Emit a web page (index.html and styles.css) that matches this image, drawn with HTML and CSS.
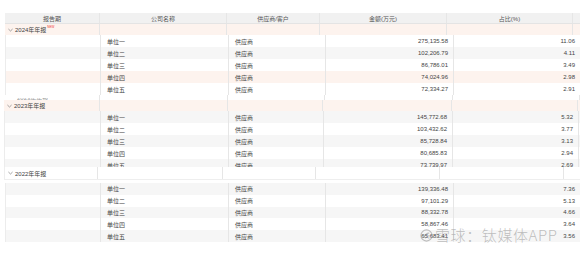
FILE: index.html
```html
<!DOCTYPE html>
<html>
  <head>
    <meta charset="utf-8"/>
    <title>前五大供应商</title>
    <link rel="stylesheet" href="styles.css">
  </head>
  <body>
    <div class="page">
      <div class="thead cols-a">
        <div class="cell">报告期</div>
        <div class="cell">公司名称</div>
        <div class="cell">供应商/客户</div>
        <div class="cell">金额(万元)</div>
        <div class="cell">占比(%)</div>
      </div>

      <div class="group pink cols-a">
        <div class="cell first"><svg class="chev" viewBox="0 0 6 4"><polyline points="0.5,0.8 3,3.2 5.5,0.8"/></svg>2024年年报<span class="new">NEW</span></div>
        <div class="cell"></div>
        <div class="cell"></div>
        <div class="cell"></div>
        <div class="cell"></div>
      </div>
      <div class="rows cols-b">
        <div class="row"><div class="cell"></div><div class="cell">单位一</div><div class="cell">供应商</div><div class="cell num">275,135.58</div><div class="cell num">11.06</div></div>
        <div class="row gray"><div class="cell"></div><div class="cell">单位二</div><div class="cell">供应商</div><div class="cell num">102,206.79</div><div class="cell num">4.11</div></div>
        <div class="row"><div class="cell"></div><div class="cell">单位三</div><div class="cell">供应商</div><div class="cell num">86,786.01</div><div class="cell num">3.49</div></div>
        <div class="row pink"><div class="cell"></div><div class="cell">单位四</div><div class="cell">供应商</div><div class="cell num">74,024.96</div><div class="cell num">2.98</div></div>
        <div class="row"><div class="cell"></div><div class="cell">单位五</div><div class="cell">供应商</div><div class="cell num">72,334.27</div><div class="cell num">2.91</div></div>
      </div>
      <div class="seam cols-b">
        <div class="cell"><span class="cut">2023年年报</span></div>
        <div class="cell"></div>
        <div class="cell"></div>
        <div class="cell"></div>
        <div class="cell"></div>
      </div>

      <div class="group pink cols-c">
        <div class="cell first"><svg class="chev" viewBox="0 0 6 4"><polyline points="0.5,0.8 3,3.2 5.5,0.8"/></svg>2023年年报</div>
        <div class="cell"></div>
        <div class="cell"></div>
        <div class="cell"></div>
        <div class="cell"></div>
      </div>
      <div class="rows clipped cols-c">
        <div class="row gray"><div class="cell"></div><div class="cell">单位一</div><div class="cell">供应商</div><div class="cell num">145,772.68</div><div class="cell num">5.32</div></div>
        <div class="row"><div class="cell"></div><div class="cell">单位二</div><div class="cell">供应商</div><div class="cell num">103,432.62</div><div class="cell num">3.77</div></div>
        <div class="row gray"><div class="cell"></div><div class="cell">单位三</div><div class="cell">供应商</div><div class="cell num">85,728.84</div><div class="cell num">3.13</div></div>
        <div class="row"><div class="cell"></div><div class="cell">单位四</div><div class="cell">供应商</div><div class="cell num">80,685.83</div><div class="cell num">2.94</div></div>
        <div class="row gray"><div class="cell"></div><div class="cell">单位五</div><div class="cell">供应商</div><div class="cell num">73,739.97</div><div class="cell num">2.69</div></div>
      </div>

      <div class="group plain cols-d">
        <div class="cell first"><svg class="chev" viewBox="0 0 6 4"><polyline points="0.5,0.8 3,3.2 5.5,0.8"/></svg>2022年年报</div>
        <div class="cell"></div>
        <div class="cell"></div>
        <div class="cell"></div>
        <div class="cell"></div>
      </div>
      <div class="rows spaced cols-b">
        <div class="row gray"><div class="cell"></div><div class="cell">单位一</div><div class="cell">供应商</div><div class="cell num">139,336.48</div><div class="cell num">7.36</div></div>
        <div class="row"><div class="cell"></div><div class="cell">单位二</div><div class="cell">供应商</div><div class="cell num">97,101.29</div><div class="cell num">5.13</div></div>
        <div class="row gray"><div class="cell"></div><div class="cell">单位三</div><div class="cell">供应商</div><div class="cell num">88,332.78</div><div class="cell num">4.66</div></div>
        <div class="row"><div class="cell"></div><div class="cell">单位四</div><div class="cell">供应商</div><div class="cell num">58,867.46</div><div class="cell num">3.64</div></div>
        <div class="row gray"><div class="cell"></div><div class="cell">单位五</div><div class="cell">供应商</div><div class="cell num">65,683.41</div><div class="cell num">3.56</div></div>
      </div>

      <div class="watermark">
        <svg class="wm-logo" viewBox="0 0 14 14"><circle cx="7" cy="7" r="6"/><path d="M4 9.5 C5 6, 8 4, 10 4.5 M5.5 10 C7 8, 9 7, 10.5 7.5"/></svg>
        <span>雪球：钛媒体APP</span>
      </div>
    </div>
  </body>
</html>
```

FILE: styles.css
```css
* {
  margin: 0;
  padding: 0;
  box-sizing: border-box;
}

html {
  font-family: 'Liberation Sans', 'Noto Sans CJK SC', sans-serif;
  font-size: 6px;
  color: #444;
}

body {
  background: #fff;
}

.page {
  position: relative;
  width: 580px;
  height: 253px;
  padding-top: 13px;
}

/* column sets, the screenshot was stitched from several captures */
.cols-a,
.cols-a .row {
  display: grid;
  grid-template-columns: 95px 127px 93px 127px 126px;
  margin-left: 5px;
}

.cols-b,
.cols-b .row {
  display: grid;
  grid-template-columns: 95px 128px 97px 128px 127px;
}

.cols-b {
  margin-left: 5px;
}

.cols-c,
.cols-c .row {
  display: grid;
  grid-template-columns: 96px 128px 95px 129px 126px;
}

.cols-c {
  margin-left: 4px;
}

.cols-d {
  display: grid;
  grid-template-columns: 93px 125px 93px 124px 124px;
  margin-left: 4px;
}

.rows {
  display: block !important;
  border-left: 1px solid #ececec;
}

.rows .row {
  margin-left: 0;
  height: 12px;
}

.cell {
  display: flex;
  align-items: center;
  padding: 0 6px;
  border-right: 1px solid #e6e6e6;
  white-space: nowrap;
  overflow: hidden;
}

.cell.num {
  justify-content: flex-end;
  padding-right: 5px;
}

.thead {
  height: 11px;
  background: #f1f1f1;
  border-bottom: 1px solid #e4e4e4;
  color: #555;
}

.thead .cell {
  justify-content: center;
}

.group {
  height: 11px;
}

.group.pink {
  background: #fdf3ee;
}

.group.plain {
  height: 13px;
  background: #fff;
  border-bottom: 1px solid #eee;
  border-left: 1px solid #eee;
}

.group .first {
  padding-left: 3px;
}

.chev {
  width: 5px;
  height: 4px;
  margin-right: 2px;
  fill: none;
  stroke: #777;
  stroke-width: 0.8;
}

.new {
  align-self: flex-start;
  margin: 1px 0 0 1px;
  font-size: 3px;
  line-height: 4px;
  color: #e33;
}

.row {
  background: #fff;
}

.row.gray {
  background: #f6f6f6;
}

.row.pink {
  background: #fdf3ee;
}

.seam {
  height: 5px;
  background: #fff;
}

.seam .cell {
  align-items: flex-end;
}

.cut {
  display: block;
  height: 2px;
  overflow: hidden;
  line-height: 1px;
  color: #999;
  padding-left: 6px;
}

.clipped {
  height: 56px;
  overflow: hidden;
}

.spaced {
  margin-top: 3px;
}

.spaced .row {
  height: 11.8px;
}

.watermark {
  position: absolute;
  left: 420px;
  top: 227px;
  display: flex;
  align-items: center;
  gap: 2px;
  color: rgba(150, 150, 150, 0.6);
  font-family: 'Noto Sans CJK SC', sans-serif;
  font-weight: 300;
  font-size: 15px;
  line-height: 16px;
  letter-spacing: 0.6px;
}

.wm-logo {
  width: 13px;
  height: 13px;
  fill: none;
  stroke: rgba(150, 150, 150, 0.6);
  stroke-width: 1.2;
}
```
